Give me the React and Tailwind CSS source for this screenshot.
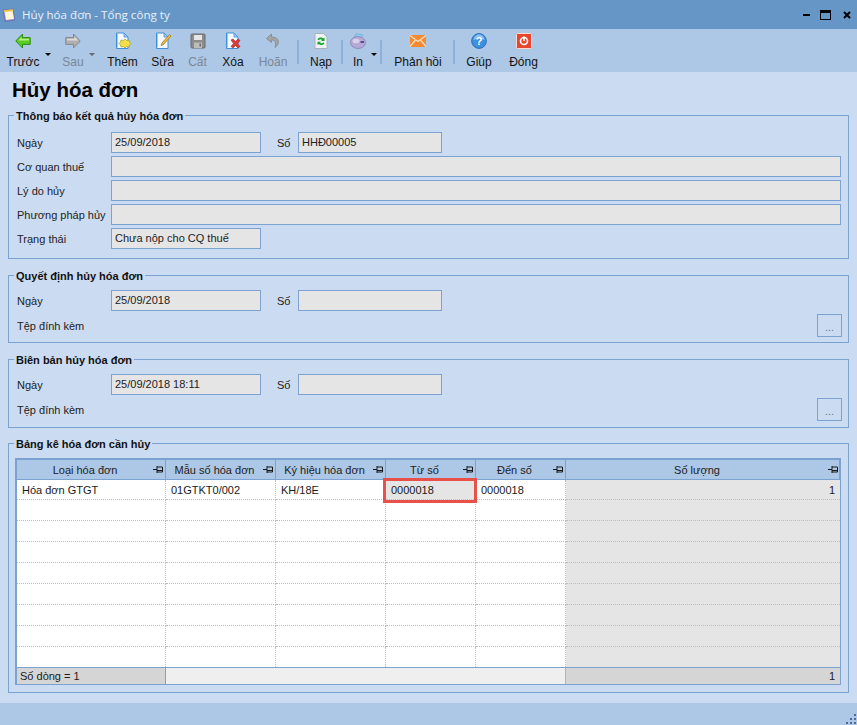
import React from "react";

function ArrowLeft() {
  return (
    <svg width="16" height="16" viewBox="0 0 16 16">
      <path d="M.8 8 L7.5 1 V4.6 H15.2 V11.4 H7.5 V15 Z" fill="#58cc22" stroke="#2c8a12" strokeWidth="1" strokeLinejoin="round" />
      <path d="M2.8 8 L6.5 4 V5.8 H14 V7.6 H3.2 Z" fill="#b4ee7e" />
    </svg>
  );
}
function ArrowRight() {
  return (
    <svg width="16" height="16" viewBox="0 0 16 16">
      <path d="M15.2 8 L8.5 1 V4.6 H.8 V11.4 H8.5 V15 Z" fill="#b0b0b0" stroke="#868686" strokeWidth="1" strokeLinejoin="round" />
      <path d="M2 5.8 H9.5 V3.6 L13.2 7.6 H2 Z" fill="#dcdcdc" />
    </svg>
  );
}
function Doc({ children }) {
  return (
    <svg width="18" height="18" viewBox="0 0 18 18">
      <path d="M2.5 1 H10 L14 5 V16.5 H2.5 Z" fill="#f4f9ff" stroke="#3f8fd8" strokeWidth="1" />
      <path d="M10 1 V5 H14 Z" fill="#a9d3f5" stroke="#3f8fd8" strokeWidth="0.8" />
      <path d="M3.5 2 V15.5" stroke="#9ccbf2" strokeWidth="1" />
      {children}
    </svg>
  );
}
function Add() {
  return (
    <Doc>
      <path d="M11 7 L12.5 8.5 L15 8 L15.5 10 L17 11.5 L15.5 13 L15 15 L12.5 14.5 L11 16 L9.5 14.5 L7 15 L6.5 13 L5 11.5 L6.5 10 L7 8 L9.5 8.5 Z" fill="#f4de4a" stroke="#a89a28" strokeWidth="0.7" />
    </Doc>
  );
}
function Edit() {
  return (
    <Doc>
      <path d="M15.5 2.5 L17 4 L9.5 12.5 L7 13.5 L8 11 Z" fill="#f3b93a" stroke="#a8781c" strokeWidth="0.8" />
    </Doc>
  );
}
function Del() {
  return (
    <Doc>
      <path d="M7 8 L9 7 L11.5 9.5 L14 7 L16 8.5 L13.5 11.5 L16 14.5 L14 16 L11.5 13.5 L9 16 L7 14.5 L9.5 11.5 Z" fill="#dd3a3a" stroke="#a82020" strokeWidth="0.6" />
    </Doc>
  );
}
function Save() {
  return (
    <svg width="16" height="16" viewBox="0 0 16 16">
      <rect x="1" y="1" width="14" height="14" rx="1" fill="#8c8c8c" stroke="#6a6a6a" />
      <rect x="4" y="2" width="8" height="5" fill="#e6e6e6" />
      <rect x="4" y="9.5" width="8" height="5.5" fill="#bdbdbd" />
      <rect x="9.5" y="10.5" width="1.5" height="3" fill="#6a6a6a" />
    </svg>
  );
}
function Undo() {
  return (
    <svg width="16" height="16" viewBox="0 0 16 16">
      <path d="M6.5 1 L1.5 5.5 L6.5 9.5 V7 C10 7 11.5 8.5 10 14.5 C14.5 11.5 15.5 4 6.5 4 Z" fill="#a6a6a6" stroke="#848484" strokeWidth="0.8" strokeLinejoin="round" />
    </svg>
  );
}
function Reload() {
  return (
    <svg width="14" height="16" viewBox="0 0 14 16">
      <path d="M1 .5 H9.5 L13 4 V15.5 H1 Z" fill="#f0f3f5" stroke="#a5b2bd" />
      <path d="M3.5 6.5 C4.5 4 8 4 9 5.5 L10.5 4.5 V8 H7 L8 7 C7 6 5.5 6 5 7.2 Z" fill="#16a42c" />
      <path d="M10.5 10 C9.5 12.5 6 12.5 5 11 L3.5 12 V8.8 H7 L6 9.7 C7 10.6 8.5 10.6 9 9.4 Z" fill="#16a42c" />
    </svg>
  );
}
function Printer() {
  return (
    <svg width="16" height="16" viewBox="0 0 16 16">
      <path d="M4 5 L6 .8 L12.5 1.8 L11 6 Z" fill="#8ecdf0" stroke="#6f9fc8" strokeWidth="0.6" />
      <ellipse cx="8" cy="9.5" rx="7.5" ry="6" fill="#b5a9d6" stroke="#8578b0" strokeWidth="0.7" />
      <ellipse cx="6" cy="8" rx="3.5" ry="2.2" fill="#d8d2ec" />
      <rect x="10.5" y="8" width="3.5" height="2" fill="#5b4c8e" />
    </svg>
  );
}
function Mail() {
  return (
    <svg width="16" height="12" viewBox="0 0 16 12">
      <rect x="0" y="0" width="16" height="12" fill="#f58a33" />
      <path d="M0 .5 L8 6.5 L16 .5 M0 11.5 L5.5 5 M16 11.5 L10.5 5" stroke="#fde2c4" strokeWidth="1.2" fill="none" />
    </svg>
  );
}
function Help() {
  return (
    <svg width="16" height="16" viewBox="0 0 16 16">
      <circle cx="8" cy="8" r="7.4" fill="#3d8fe0" stroke="#1f62ad" strokeWidth="0.8" />
      <path d="M2.5 7 C3 3 6 1.5 8 1.5 C10.5 1.5 13 3 13.5 7 C10 5 6 5 2.5 7 Z" fill="#8cc2f2" />
      <text x="8" y="12" textAnchor="middle" fontSize="11" fontWeight="700" fontFamily="Liberation Sans, sans-serif" fill="#ffffff">?</text>
    </svg>
  );
}
function Power() {
  return (
    <svg width="16" height="16" viewBox="0 0 16 16">
      <rect x="0.5" y="0.5" width="15" height="15" rx="1" fill="#e8452f" stroke="#f8d8cc" />
      <circle cx="8" cy="8" r="3.5" fill="none" stroke="#ffffff" strokeWidth="1.6" />
      <path d="M8 3.5 V8" stroke="#ffffff" strokeWidth="1.6" />
    </svg>
  );
}
function AppIcon() {
  return (
    <svg width="14" height="14" viewBox="0 0 14 14">
      <path d="M1 2 L11 1 L13 12 L3 13.5 Z" fill="#8d83d0" stroke="#6a62a8" strokeWidth="0.6" />
      <path d="M2.5 3.5 L10.5 2.5 L12 11 L4 12 Z" fill="#fbf6d8" />
      <path d="M1.5 2.2 L11 1.2 L11.3 3.2 L2 4 Z" fill="#e9c64a" />
    </svg>
  );
}
function Pin() {
  return (
    <svg width="11" height="9" viewBox="0 0 11 9" className="shrink-0">
      <path d="M0 4.5 H4 M4 1 V8 M4 2 H9.5 V7 H4 M4 5.5 H9.5" stroke="#1a1a1a" strokeWidth="1" fill="none" />
    </svg>
  );
}
function Caret({ className }) {
  return <span className={`absolute top-[21px] w-0 h-0 border-x-[3px] border-x-transparent border-t-[3px] ${className}`} />;
}

function ToolBtn({ icon, label, className = "", disabled, children }) {
  return (
    <div className={`relative shrink-0 flex flex-col items-center ${className}`}>
      <div className="h-[18px] flex items-center justify-center">{icon}</div>
      <div className={`mt-[5px] text-[12px] leading-[14px] whitespace-nowrap ${disabled ? "text-[#7b8794]" : "text-[#141414]"}`}>{label}</div>
      {children}
    </div>
  );
}
function Sep({ className = "" }) {
  return <div className={`shrink-0 w-[2px] h-[24px] mt-[8px] bg-[#8eb0d9] ${className}`} />;
}

function Label({ children, className = "w-[94px]" }) {
  return <div className={`shrink-0 whitespace-nowrap text-[#222222] ${className}`}>{children}</div>;
}
function Input({ children, className = "w-[150px]" }) {
  return (
    <div className={`h-[21px] border border-[#7ba2d1] bg-[#e5e5e5] pl-[3px] leading-[19px] text-[#222222] whitespace-nowrap ${className}`}>
      {children}
    </div>
  );
}
function Row({ children, className = "mb-[3px]" }) {
  return <div className={`flex items-center ${className}`}>{children}</div>;
}
function Group({ title, className, children }) {
  return (
    <section className={`border border-[#7ba2d1] pl-[8px] pr-[6px] ${className}`}>
      <div className="-mt-[8px] h-[16px] leading-[16px] w-fit -ml-[3px] px-[2px] bg-[#cbdcf2] font-bold text-[#111111] whitespace-nowrap">
        {title}
      </div>
      {children}
    </section>
  );
}
function Attach() {
  return (
    <Row className="justify-between">
      <Label>Tệp đính kèm</Label>
      <button className="w-[25px] h-[23px] border border-[#7ba2d1] text-[#777777] text-[11px] leading-[24px]">...</button>
    </Row>
  );
}

const cols = "grid grid-cols-[149px_110px_110px_90px_90px_274px]";
const headers = ["Loại hóa đơn", "Mẫu số hóa đơn", "Ký hiệu hóa đơn", "Từ số", "Đến số", "Số lượng"];
const rowClass = ["h-[20px]", "h-[21px]", "h-[21px]", "h-[21px]", "h-[21px]", "h-[21px]", "h-[21px]", "h-[21px]", "h-[20px]"];

function Cell({ children, last, grey, right, bottom }) {
  return (
    <div
      className={`flex items-center pl-[5px] pr-[5px] whitespace-nowrap text-[#1a1a1a] border-dotted border-[#bdbdbd] ${last ? "" : "border-r"} ${bottom ? "" : "border-b"} ${grey ? "bg-[#e5e5e5]" : ""} ${right ? "justify-end" : ""}`}
    >
      {children}
    </div>
  );
}

export default function App() {
  return (
    <div
      className="w-[857px] h-[725px] overflow-hidden flex flex-col bg-[#cbdcf2] text-[11px] leading-[16px]"
      style={{ fontFamily: '"Liberation Sans", Arial, sans-serif' }}
    >
      <header className="h-[29px] shrink-0 bg-[#6596c6] flex items-center pl-[2px] pr-[6px]">
        <AppIcon />
        <div className="ml-[6px] text-[11.6px] text-[#e8f0fa]" style={{ fontFamily: '"Open Sans", sans-serif' }}>
          Hủy hóa đơn - Tổng công ty
        </div>
        <div className="ml-auto flex items-center">
          <span className="w-[7px] h-[2px] bg-black" />
          <span className="ml-[10px] w-[11px] h-[10px] border border-black border-t-[3px]" />
          <svg className="ml-[12px]" width="8" height="8" viewBox="0 0 8 8">
            <path d="M1 1 L7 7 M7 1 L1 7" stroke="#000" strokeWidth="2" />
          </svg>
        </div>
      </header>

      <nav className="h-[43px] shrink-0 bg-[#adc7e6] flex items-start pt-[3px] pl-[4px]">
        <ToolBtn icon={<ArrowLeft />} label="Trước" className="w-[38px]">
          <Caret className="left-[41px] border-t-black" />
        </ToolBtn>
        <ToolBtn icon={<ArrowRight />} label="Sau" disabled className="w-[30px] ml-[16px]">
          <Caret className="left-[31px] border-t-[#666666]" />
        </ToolBtn>
        <ToolBtn icon={<Add />} label="Thêm" className="w-[53px] ml-[8px]" />
        <ToolBtn icon={<Edit />} label="Sửa" className="w-[27px]" />
        <ToolBtn icon={<Save />} label="Cất" disabled className="w-[43px]" />
        <ToolBtn icon={<Del />} label="Xóa" className="w-[28px]" />
        <ToolBtn icon={<Undo />} label="Hoãn" disabled className="w-[48px] ml-[2px]" />
        <Sep />
        <ToolBtn icon={<Reload />} label="Nạp" className="w-[40px] ml-[2px]" />
        <Sep />
        <ToolBtn icon={<Printer />} label="In" className="w-[30px]">
          <Caret className="left-[28px] border-t-black" />
        </ToolBtn>
        <Sep className="ml-[7px]" />
        <ToolBtn icon={<Mail />} label="Phản hồi" className="w-[72px]" />
        <Sep className="-ml-[1px]" />
        <ToolBtn icon={<Help />} label="Giúp" className="w-[48px]" />
        <ToolBtn icon={<Power />} label="Đóng" className="w-[41px]" />
      </nav>

      <main className="flex-1 px-[8px]">
        <h1 className="h-[43px] pl-[4px] pt-[3px] text-[20.5px] leading-[30px] font-bold text-black">Hủy hóa đơn</h1>

        <Group title="Thông báo kết quả hủy hóa đơn" className="h-[144px]">
          <div className="mt-[8px]">
            <Row>
              <Label>Ngày</Label>
              <Input>25/09/2018</Input>
              <Label className="ml-[16px] w-[21px]">Số</Label>
              <Input className="w-[144px]">HHĐ00005</Input>
            </Row>
            <Row>
              <Label>Cơ quan thuế</Label>
              <Input className="w-[730px]" />
            </Row>
            <Row>
              <Label>Lý do hủy</Label>
              <Input className="w-[730px]" />
            </Row>
            <Row>
              <Label>Phương pháp hủy</Label>
              <Input className="w-[730px]" />
            </Row>
            <Row>
              <Label>Trạng thái</Label>
              <Input>Chưa nộp cho CQ thuế</Input>
            </Row>
          </div>
        </Group>

        <Group title="Quyết định hủy hóa đơn" className="h-[68px] mt-[16px]">
          <div className="mt-[6px]">
            <Row>
              <Label>Ngày</Label>
              <Input>25/09/2018</Input>
              <Label className="ml-[16px] w-[21px]">Số</Label>
              <Input className="w-[144px]" />
            </Row>
            <Attach />
          </div>
        </Group>

        <Group title="Biên bản hủy hóa đơn" className="h-[69px] mt-[16px]">
          <div className="mt-[6px]">
            <Row>
              <Label>Ngày</Label>
              <Input>25/09/2018 18:11</Input>
              <Label className="ml-[16px] w-[21px]">Số</Label>
              <Input className="w-[144px]" />
            </Row>
            <Attach />
          </div>
        </Group>

        <Group title="Bảng kê hóa đơn cần hủy" className="h-[250px] mt-[15px]">
          <div className="relative mt-[6px] -ml-[2px] w-[826px] h-[227px] border-2 border-[#7ba2d1] bg-white flex flex-col">
            <div className={`${cols} h-[20px] shrink-0 bg-[#adc7e6] border-b border-[#7ba2d1]`}>
              {headers.map((h, i) => (
                <div
                  key={h}
                  className={`relative flex items-center justify-center pr-[12px] text-[#222222] whitespace-nowrap ${i < 5 ? "border-r border-[#7ba2d1]" : ""}`}
                >
                  {h}
                  <span className="absolute right-[1px] top-[5px]">
                    <Pin />
                  </span>
                </div>
              ))}
            </div>
            {rowClass.map((rc, r) => (
              <div key={r} className={`${cols} ${rc} shrink-0`}>
                <Cell bottom={r === 8}>{r === 0 ? "Hóa đơn GTGT" : ""}</Cell>
                <Cell bottom={r === 8}>{r === 0 ? "01GTKT0/002" : ""}</Cell>
                <Cell bottom={r === 8}>{r === 0 ? "KH/18E" : ""}</Cell>
                <Cell bottom={r === 8} grey={r === 0}>{r === 0 ? "0000018" : ""}</Cell>
                <Cell bottom={r === 8}>{r === 0 ? "0000018" : ""}</Cell>
                <Cell bottom={r === 8} grey last right>{r === 0 ? "1" : ""}</Cell>
              </div>
            ))}
            <div className={`${cols} flex-1 border-t border-[#7ba2d1]`}>
              <div className="bg-[#d5d5d5] pl-[3px] flex items-center text-[#1a1a1a] col-span-1 border-r border-[#7ba2d1]">Số dòng = 1</div>
              <div className="bg-[#efefef] col-span-4 border-r border-[#b4b4b4]" />
              <div className="bg-[#d5d5d5] flex items-center justify-end pr-[5px] text-[#1a1a1a]">1</div>
            </div>
            <div className="absolute left-[366px] top-[18px] w-[94px] h-[25px] border-[3px] border-[#e8504a]" />
          </div>
        </Group>
      </main>

      <footer className="h-[22px] shrink-0 bg-[#adc7e6] flex items-end justify-end pr-[1px] pb-[1px]">
        <svg width="10" height="10" viewBox="0 0 10 10">
          <g fill="#4a6b9c">
            <rect x="8" y="0" width="2" height="2" />
            <rect x="4" y="4" width="2" height="2" />
            <rect x="8" y="4" width="2" height="2" />
            <rect x="0" y="8" width="2" height="2" />
            <rect x="4" y="8" width="2" height="2" />
            <rect x="8" y="8" width="2" height="2" />
          </g>
        </svg>
      </footer>
    </div>
  );
}
